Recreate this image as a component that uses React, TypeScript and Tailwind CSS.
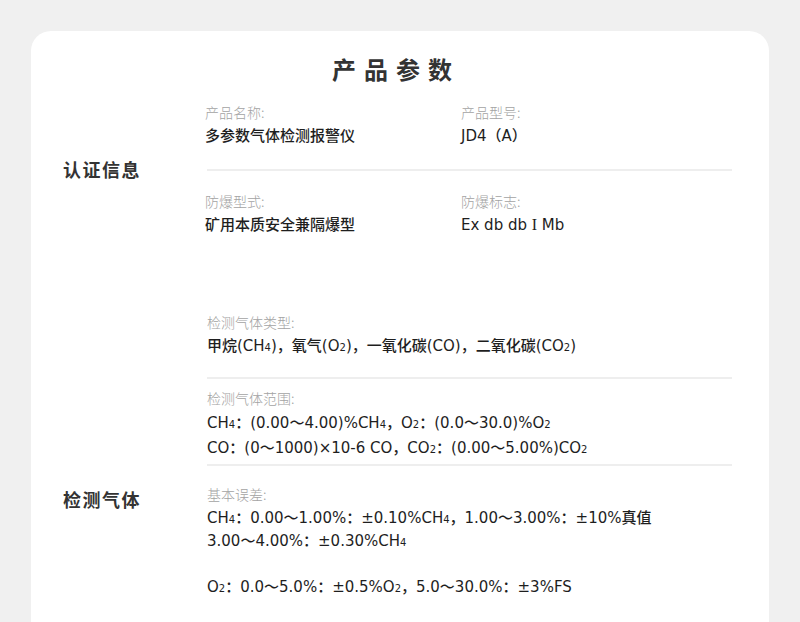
import React from "react";

const font = { fontFamily: '"Noto Sans CJK SC", "Noto Sans", sans-serif' };
const valueFont = { fontFamily: '"DejaVu Sans", "Noto Sans CJK SC", sans-serif' };

function S({ children }: { children: React.ReactNode }) {
  return <span className="text-[10px] leading-none">{children}</span>;
}

function Label({ children }: { children: React.ReactNode }) {
  return <div className="text-[14px] leading-[26px] text-[#a3a3a3] font-light">{children}</div>;
}

function Value({ children, lh = "leading-[23px]" }: { children: React.ReactNode; lh?: string }) {
  return (
    <div className={`text-[15px] ${lh} text-[#1e1e1e] font-medium`} style={valueFont}>
      {children}
    </div>
  );
}

export default function App() {
  return (
    <div className="min-h-screen bg-[#f0f0f0] pt-[31px] px-[31px]" style={font}>
      <div className="bg-white rounded-t-[20px] pb-[120px]">
        <h1 className="pt-[21px] text-center text-[24px] leading-[34px] font-bold tracking-[8px] text-[#333] pr-[8px]">
          产品参数
        </h1>

        {/* 认证信息 */}
        <div className="flex items-center mt-[13px]">
          <div className="w-[174px] pl-[32px] text-[18px] font-bold tracking-[1.5px] text-[#333]">认证信息</div>
          <div className="w-[527px]">
            <div className="flex pb-[21px]">
              <div className="w-[256px]">
                <Label>产品名称:</Label>
                <Value>多参数气体检测报警仪</Value>
              </div>
              <div>
                <Label>产品型号:</Label>
                <Value>JD4（A）</Value>
              </div>
            </div>
            <div className="ml-[2px] h-[2px] bg-[#eeeeee]" />
            <div className="flex pt-[17px] pb-[2px]">
              <div className="w-[256px]">
                <Label>防爆型式:</Label>
                <Value>矿用本质安全兼隔爆型</Value>
              </div>
              <div>
                <Label>防爆标志:</Label>
                <Value>
                  Ex db db <span className="font-['Liberation_Serif'] text-[16px] leading-none">I</span> Mb
                </Value>
              </div>
            </div>
          </div>
        </div>

        {/* 检测气体 */}
        <div className="flex items-center mt-[70px]">
          <div className="w-[174px] pl-[32px] text-[18px] font-bold tracking-[1.5px] text-[#333]">检测气体</div>
          <div className="w-[525px] ml-[2px]">
            <div className="pb-[19px] border-b-2 border-[#eeeeee]">
              <Label>检测气体类型:</Label>
              <Value>
                甲烷(CH<S>4</S>)，氧气(O<S>2</S>)，一氧化碳(CO)，二氧化碳(CO<S>2</S>)
              </Value>
            </div>
            <div className="pt-[6px] pb-[3px] border-b-2 border-[#eeeeee]">
              <Label>检测气体范围:</Label>
              <Value lh="leading-[25px]">
                CH<S>4</S>：(0.00～4.00)%CH<S>4</S>，O<S>2</S>：(0.0～30.0)%O<S>2</S>
              </Value>
              <Value lh="leading-[25px]">
                CO：(0～1000)×10-6 CO，CO<S>2</S>：(0.00～5.00%)CO<S>2</S>
              </Value>
            </div>
            <div className="pt-[15px] pb-[88px] border-b-2 border-[#eeeeee]">
              <Label>基本误差:</Label>
              <Value>
                CH<S>4</S>：0.00～1.00%：±0.10%CH<S>4</S>，1.00～3.00%：±10%真值
              </Value>
              <Value>3.00～4.00%：±0.30%CH<S>4</S></Value>
              <Value>&nbsp;</Value>
              <Value>
                O<S>2</S>：0.0～5.0%：±0.5%O<S>2</S>，5.0～30.0%：±3%FS
              </Value>
            </div>
          </div>
        </div>
      </div>
    </div>
  );
}
